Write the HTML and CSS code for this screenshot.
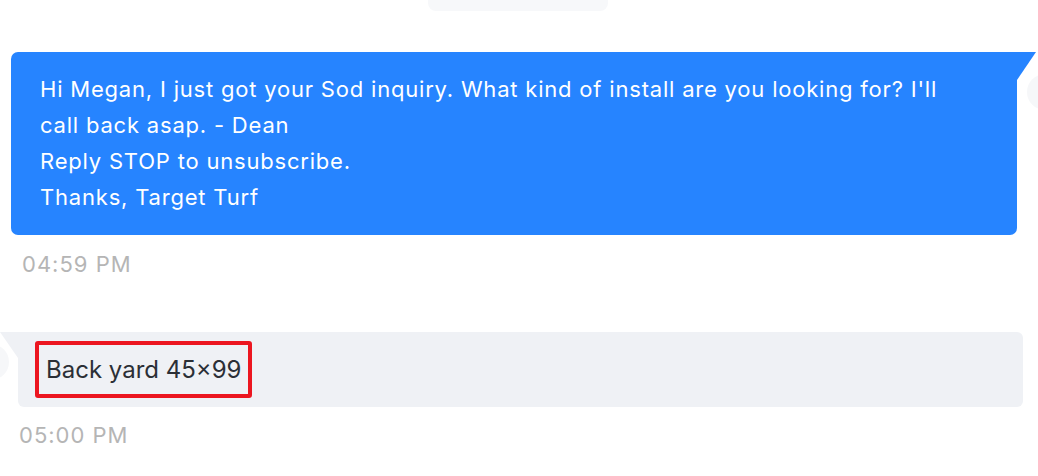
FILE: index.html
```html
<!DOCTYPE html>
<html>
<head>
<meta charset="utf-8">
<link rel="stylesheet" href="styles.css">
</head>
<body>
<div class="page">
  <div class="top-pill"></div>
  <div class="msg out">
    <div class="bubble blue">
      <p>Hi Megan, I just got your Sod inquiry. What kind of install are you looking for? I'll<br>call back asap. - Dean<br>Reply STOP to unsubscribe.<br>Thanks, Target Turf</p>
      <span class="tail tail-right"></span>
    </div>
    <span class="avatar avatar-right"></span>
    <div class="time t1">04:59 PM</div>
  </div>
  <div class="msg in">
    <div class="bubble gray">
      <span class="highlight">Back yard 45×99</span>
      <span class="tail tail-left"></span>
    </div>
    <span class="avatar avatar-left"></span>
    <div class="time t2">05:00 PM</div>
  </div>
</div>
</body>
</html>
```
FILE: styles.css
```css
html, body {
  margin: 0;
  padding: 0;
  background: #ffffff;
}
.page {
  width: 1038px;
  height: 476px;
  overflow: hidden;
  position: relative;
  font-family: Inter, "Noto Sans", sans-serif;
}
.top-pill {
  width: 180px;
  height: 11px;
  margin-left: 428px;
  background: #f7f8fa;
  border-radius: 0 0 8px 8px;
}
.msg {
  position: relative;
}
.msg.out {
  margin-top: 41px;
  padding-left: 11px;
  width: 1006px;
}
.bubble {
  position: relative;
}
.bubble.blue {
  background: #2684ff;
  color: #ffffff;
  border-radius: 7px 0 7px 7px;
  padding: 19px 29px 19px 29px;
  height: 145px;
}
.bubble.blue p {
  margin: 0;
  font-size: 22px;
  line-height: 36px;
  letter-spacing: 0.8px;
}
.tail {
  position: absolute;
  top: 0;
  width: 0;
  height: 0;
}
.tail-right {
  right: -19px;
  border-top: 28px solid #2684ff;
  border-right: 19px solid transparent;
}
.msg.in .tail-left {
  left: -18px;
  border-top: 26px solid #eff1f5;
  border-left: 18px solid transparent;
}
.avatar {
  position: absolute;
  width: 36px;
  height: 36px;
  border-radius: 50%;
  background: #f6f7f9;
}
.avatar-right {
  left: 1027px;
  top: 22px;
}
.avatar-left {
  left: -27px;
  top: 12px;
}
.time {
  color: #b5b5b5;
  font-size: 22px;
  line-height: 26px;
  letter-spacing: 1px;
}
.time.t1 {
  margin-top: 16px;
  padding-left: 11px;
}
.msg.in {
  margin-top: 55px;
  padding-left: 18px;
  width: 1005px;
}
.bubble.gray {
  background: #eff1f5;
  border-radius: 0 6px 6px 6px;
  height: 75px;
  padding: 9px 17px 0 17px;
  box-sizing: border-box;
}
.highlight {
  display: inline-block;
  border: 4px solid #ec1620;
  border-radius: 3px;
  padding: 0 7px;
  height: 49px;
  line-height: 49px;
  font-size: 24px;
  color: #2b2f36;
  vertical-align: top;
}
.time.t2 {
  margin-top: 15px;
  padding-left: 1px;
}
```
